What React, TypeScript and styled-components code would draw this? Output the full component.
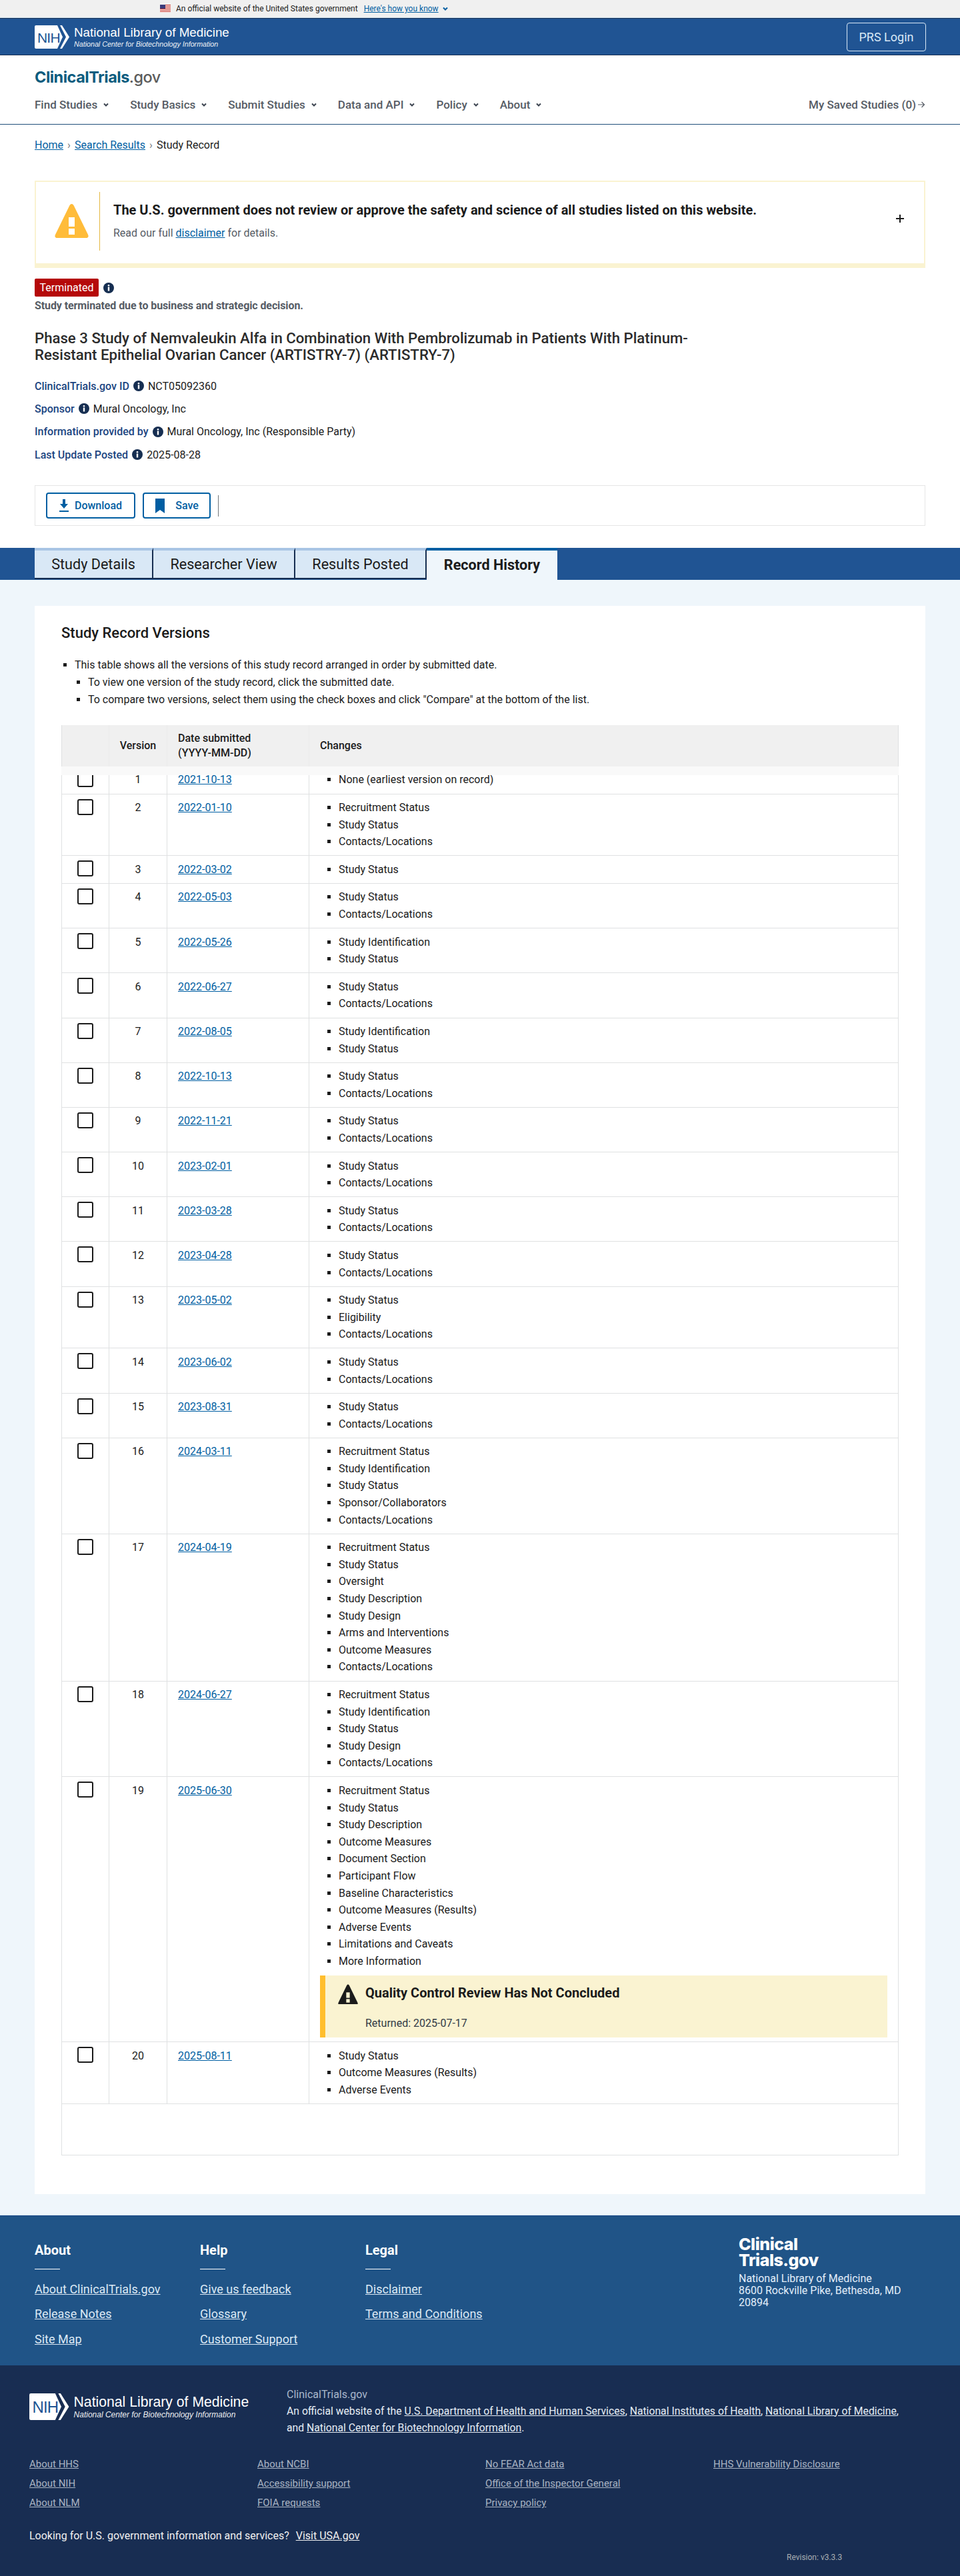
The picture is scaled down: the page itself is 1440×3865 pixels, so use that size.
import styled, { createGlobalStyle } from "styled-components";

const GlobalStyle = createGlobalStyle`
  html, body {
    margin: 0;
    padding: 0;
    background: #fff;
    color: #1b1b1b;
    font-family: Roboto, "Liberation Sans", sans-serif;
    font-size: 16px;
  }
  * { box-sizing: border-box; }
  a { color: #005ea2; }
`;

/* ---------- top banner + masthead ---------- */
const GovBanner = styled.div`
  height: 27px;
  background: #f0f0f0;
  border-bottom: 1px solid #cfe3f3;
  display: flex;
  align-items: center;
  padding-left: 240px;
  font-size: 12px;
  color: #1b1b1b;
  svg { display: block; }
`;
const GovText = styled.span`
  margin-left: 8px;
`;
const GovLink = styled.a`
  margin-left: 9px;
`;
const GovChevron = styled.span`
  margin-left: 5px;
  display: flex;
  color: #005ea2;
`;
const Masthead = styled.div`
  height: 56px;
  background: #205493;
  border-top: 1px solid #162e51;
  border-bottom: 1px solid #162e51;
  padding: 0 51px 0 52px;
  display: flex;
  align-items: center;
  justify-content: space-between;
`;
const LoginBtn = styled.a`
  width: 119px;
  height: 43px;
  border: 1px solid #d9e8f6;
  border-radius: 4px;
  color: #d9e8f6;
  display: flex;
  align-items: center;
  justify-content: center;
  font-size: 18px;
`;
const LogoWrap = styled.div`
  display: flex;
  align-items: center;
  color: #fff;
  gap: 6px;
`;
const LogoText = styled.div<{ $large?: boolean }>`
  font-family: "Liberation Sans", Arial, sans-serif;
  font-size: ${(p) => (p.$large ? "21.2px" : "18.8px")};
  line-height: ${(p) => (p.$large ? "25px" : "22px")};
  white-space: nowrap;
  small {
    display: block;
    font-style: italic;
    font-size: ${(p) => (p.$large ? "12px" : "10.7px")};
    line-height: ${(p) => (p.$large ? "14px" : "12px")};
    opacity: 0.92;
  }
`;

/* ---------- site nav ---------- */
const SiteHead = styled.div`
  height: 104px;
  padding: 20px 52px 0;
  border-bottom: 1px solid #1f4e79;
`;
const Brand = styled.div`
  font-family: Inter, "Open Sans", sans-serif;
  font-size: 23.5px;
  line-height: 26px;
  font-weight: 700;
  letter-spacing: -0.5px;
  color: #0c5c7e;
  span {
    font-weight: 500;
    color: #5c5c5c;
  }
`;
const NavRow = styled.nav`
  margin-top: 17px;
  display: flex;
  align-items: center;
  height: 22px;
`;
const NavItem = styled.a`
  display: flex;
  align-items: center;
  gap: 8px;
  margin-right: 31px;
  font-weight: 500;
  font-size: 17px;
  color: #565c65;
`;
const SavedLink = styled.a`
  margin-left: auto;
  display: flex;
  align-items: center;
  gap: 2px;
  font-weight: 500;
  font-size: 17px;
  color: #565c65;
`;
const Crumbs = styled.div`
  padding: 20px 52px 42px;
  line-height: 22px;
  display: flex;
  align-items: center;
  gap: 6px;
  color: #1b1b1b;
  i {
    width: 5px;
    font-style: normal;
    color: #71767a;
  }
`;

/* ---------- study summary ---------- */
const Summary = styled.section`
  padding: 0 52px 32.8px;
`;
const Notice = styled.div`
  height: 131px;
  border: 2px solid #faf3d1;
  border-bottom-width: 7px;
  padding: 15px 0 0 28px;
  display: flex;
  position: relative;
`;
const NoticeIcon = styled.div`
  width: 68px;
  height: 88px;
  border-right: 1px solid #e5b842;
  padding-top: 17px;
`;
const NoticeBody = styled.div`
  padding: 14px 0 0 20px;
`;
const NoticeTitle = styled.div`
  font-size: 20px;
  font-weight: 700;
  line-height: 26px;
  color: #1b1b1b;
`;
const NoticeText = styled.div`
  margin-top: 11px;
  line-height: 22px;
  color: #565c65;
`;
const PlusBtn = styled.span`
  position: absolute;
  right: 29px;
  top: 48px;
  display: flex;
  color: #1b1b1b;
`;
const StatusRow = styled.div`
  margin-top: 16px;
  display: flex;
  align-items: center;
  gap: 7px;
`;
const StatusBadge = styled.span`
  width: 96px;
  height: 27px;
  background: #b50909;
  color: #fff;
  border-radius: 2px;
  display: flex;
  align-items: center;
  justify-content: center;
`;
const WhyStopped = styled.div`
  margin-top: 3px;
  line-height: 22px;
  font-weight: 700;
  letter-spacing: -0.1px;
  color: #565c65;
`;
const StudyTitle = styled.h1`
  margin: 25px 0 0;
  font-size: 22.2px;
  line-height: 25px;
  font-weight: 500;
  color: #2b2b2b;
`;
const MetaList = styled.div`
  margin-top: 17px;
`;
const MetaRow = styled.div`
  height: 34.3px;
  display: flex;
  align-items: center;
  gap: 6px;
`;
const MetaLabel = styled.span`
  font-weight: 500;
  color: #1a4480;
`;
const ActionBox = styled.div`
  margin-top: 29px;
  height: 61px;
  border: 1px solid #e6e6e6;
  padding: 0 16px;
  display: flex;
  align-items: center;
  gap: 11px;
`;
const ActionBtn = styled.a<{ $w: number }>`
  width: ${(p) => p.$w}px;
  height: 39px;
  border: 2px solid #005ea2;
  border-radius: 4px;
  display: flex;
  align-items: center;
  justify-content: center;
  gap: 9px;
  color: #005ea2;
  font-weight: 500;
`;
const ActionSep = styled.span`
  width: 1px;
  height: 32px;
  background: #71767a;
`;

/* ---------- tabs ---------- */
const TabBand = styled.div`
  height: 48px;
  background: #205493;
  padding-left: 52px;
  display: flex;
`;
const Tab = styled.div<{ $w: number; $active?: boolean }>`
  width: ${(p) => p.$w}px;
  height: ${(p) => (p.$active ? "48px" : "47px")};
  display: flex;
  align-items: center;
  justify-content: center;
  font-size: 21.6px;
  font-weight: ${(p) => (p.$active ? 700 : 400)};
  color: #1b1b1b;
  background: ${(p) => (p.$active ? "#eff6fb" : "#d9e8f6")};
  border-top: 4px solid ${(p) => (p.$active ? "#005ea2" : "#a9c5e4")};
  border-bottom: ${(p) => (p.$active ? "none" : "2px solid #162e51")};
  border-right: ${(p) => (p.$active ? "none" : "2px solid #162e51")};
`;

/* ---------- versions card ---------- */
const Main = styled.main`
  background: #eff6fb;
  padding: 39px 52px 32px;
`;
const Card = styled.div`
  background: #fff;
  padding: 28px 40px 58px;
`;
const CardTitle = styled.h2`
  margin: 0;
  font-size: 22px;
  line-height: 26px;
  font-weight: 500;
`;
const HelpList = styled.ul<{ $nested?: boolean }>`
  margin: ${(p) => (p.$nested ? "0" : "22px 0 25px")};
  padding-left: 20px;
  line-height: 26px;
  list-style: square;
`;
const Table = styled.div`
  border-left: 1px solid #dfe1e2;
  border-right: 1px solid #dfe1e2;
  border-bottom: 1px solid #dfe1e2;
`;
const Columns = styled.div`
  display: grid;
  grid-template-columns: 70px 87px 213px 1fr;
`;
const HeadRow = styled(Columns)`
  height: 62px;
  background: #f0f0f0;
  position: relative;
  z-index: 1;
  font-weight: 500;
  line-height: 22px;
  &::after {
    content: "";
    position: absolute;
    left: -1px;
    right: -1px;
    top: 100%;
    height: 13px;
    background: #f9f9f9;
  }
`;
const HeadCell = styled.div<{ $center?: boolean }>`
  display: flex;
  align-items: center;
  justify-content: ${(p) => (p.$center ? "center" : "flex-start")};
  padding-left: ${(p) => (p.$center ? "0" : "16px")};
  border-left: 1px solid #ebebeb;
  &:first-child { border-left: none; }
`;
const Row = styled(Columns)`
  border-bottom: 1px solid #dfe1e2;
`;
const Cell = styled.div<{ $center?: boolean }>`
  padding: 7.5px ${(p) => (p.$center ? "0" : "16px")};
  line-height: 25.6px;
  text-align: ${(p) => (p.$center ? "center" : "left")};
  border-left: 1px solid #dfe1e2;
  &:first-child { border-left: none; }
`;
const CheckCell = styled(Cell)`
  padding: 7px 0 0;
  display: flex;
  justify-content: center;
`;
const CheckBox = styled.span`
  width: 24px;
  height: 24px;
  border: 2px solid #1b1b1b;
  border-radius: 3px;
  background: #fff;
`;
const ChangeList = styled.ul`
  margin: 0;
  padding-left: 28px;
  list-style: square;
`;
const FooterRow = styled.div`
  height: 76px;
`;
const QcAlert = styled.div`
  margin: 8px 0 -1px;
  height: 93px;
  background: #faf3d1;
  border-left: 8px solid #ffbe2e;
  padding: 13px 0 0 19px;
  display: grid;
  grid-template-columns: 41px 1fr;
`;
const QcTitle = styled.div`
  font-size: 20px;
  line-height: 26px;
  font-weight: 700;
`;
const QcText = styled.div`
  grid-column: 2;
  margin-top: 8px;
  line-height: 24px;
  color: #323a45;
`;

/* ---------- footers ---------- */
const SiteFooter = styled.footer`
  height: 225px;
  background: #205487;
  border-top: 1px solid #1a4480;
  box-shadow: 0 -1px 0 #cfe3f3;
  padding: 38px 52px 0;
  display: flex;
`;
const FooterCol = styled.div`
  width: 248px;
`;
const FooterHeading = styled.div`
  font-size: 20px;
  line-height: 26px;
  font-weight: 700;
  color: #fff;
  &::after {
    content: "";
    display: block;
    width: 38px;
    height: 1px;
    margin: 15px 0 17px;
    background: #fff;
  }
`;
const FooterLink = styled.a`
  display: block;
  font-size: 18px;
  line-height: 25px;
  margin-bottom: 12.5px;
  color: #dce9f5;
  text-decoration: underline;
`;
const FooterBrand = styled.div`
  margin-left: auto;
  width: 280px;
  margin-top: -8px;
  color: #e3eefa;
  line-height: 18px;
`;
const FooterLogo = styled.div`
  font-family: Inter, "Open Sans", sans-serif;
  font-weight: 800;
  font-size: 25px;
  line-height: 24px;
  letter-spacing: -0.5px;
  color: #fff;
  margin-bottom: 7px;
`;
const AgencyFooter = styled.div`
  height: 316px;
  background: #182d52;
  padding: 31px 44px 0;
  position: relative;
`;
const AgencyTop = styled.div`
  display: flex;
`;
const AgencyLogo = styled.div`
  width: 386px;
  padding-top: 11px;
`;
const AgencyName = styled.div`
  line-height: 25px;
  color: #a9b8cc;
`;
const AgencyLine = styled.div`
  width: 950px;
  font-size: 15.75px;
  line-height: 25px;
  color: #e6edf5;
  a { color: #e6edf5; }
`;
const AgencyLinks = styled.div`
  margin-top: 28px;
  display: grid;
  grid-template-columns: repeat(4, 342px);
  grid-template-rows: repeat(3, 29px);
  grid-auto-flow: column;
  align-items: center;
`;
const AgencyLink = styled.a`
  font-size: 15px;
  color: #a9b4c3;
  justify-self: start;
`;
const UsaLine = styled.div`
  margin-top: 24px;
  line-height: 22px;
  color: #f0f0f0;
  a { color: #f0f0f0; margin-left: 6px; }
`;
const Revision = styled.div`
  position: absolute;
  left: 1180px;
  top: 281px;
  font-size: 12px;
  color: #a9aeb1;
`;

/* ---------- drawings ---------- */
function Chevron({ color = "#3d4551", size = 10 }: { color?: string; size?: number }) {
  return (
    <svg width={size} height={size} viewBox="0 0 10 10">
      <polyline points="2,3.5 5,6.5 8,3.5" fill="none" stroke={color} strokeWidth="2" />
    </svg>
  );
}

function InfoIcon() {
  return (
    <svg width="16" height="16" viewBox="0 0 16 16">
      <circle cx="8" cy="8" r="8" fill="#162e51" />
      <circle cx="8" cy="4.2" r="1.3" fill="#fff" />
      <rect x="6.8" y="6.5" width="2.4" height="6" fill="#fff" />
    </svg>
  );
}

function Flag() {
  return (
    <svg width="16" height="12" viewBox="0 0 16 12">
      <rect width="16" height="12" fill="#fff" />
      {[0, 2, 4, 6, 8, 10].map((y) => (
        <rect key={y} y={y} width="16" height="1" fill="#c8372d" />
      ))}
      <rect width="8" height="6" fill="#3c3b7a" />
    </svg>
  );
}

function NihMark({ height }: { height: number }) {
  return (
    <svg width={(height * 53) / 35} height={height} viewBox="0 0 53 35">
      <path d="M2 0H34L42 17.5L34 35H2Q0 35 0 33V2Q0 0 2 0Z" fill="#fff" />
      <path d="M38 0H41L52 17.5L41 35H38L47 17.5Z" fill="#fff" />
      <text x="4" y="25.5" fontFamily="Liberation Sans, Arial, sans-serif" fontSize="21" letterSpacing="-0.8" fill="#205493">
        NIH
      </text>
    </svg>
  );
}

function WarnTriangle({ width, fill, mark }: { width: number; fill: string; mark: string }) {
  return (
    <svg width={width} height={(width * 52) / 51} viewBox="0 0 51 52">
      <path d="M25.5 1 C27 1 28 2 29 4 L50 47 C51.5 50 50 52 47 52 H4 C1 52 -0.5 50 1 47 L22 4 C23 2 24 1 25.5 1Z" fill={fill} />
      <rect x="21" y="21" width="9" height="14" fill={mark} />
      <rect x="21" y="38" width="9" height="9" fill={mark} />
    </svg>
  );
}

function Arrow() {
  return (
    <svg width="12" height="12" viewBox="0 0 12 12">
      <path d="M1 6H10.5M6.5 2L10.5 6L6.5 10" fill="none" stroke="#565c65" strokeWidth="1.2" />
    </svg>
  );
}

function Logo({ large }: { large?: boolean }) {
  return (
    <LogoWrap>
      <NihMark height={large ? 40 : 35} />
      <LogoText $large={large}>
        National Library of Medicine
        <small>National Center for Biotechnology Information</small>
      </LogoText>
    </LogoWrap>
  );
}

/* ---------- data ---------- */
const NAV = ["Find Studies", "Study Basics", "Submit Studies", "Data and API", "Policy", "About"];

const SS = "Study Status";
const CL = "Contacts/Locations";
const RS = "Recruitment Status";
const SI = "Study Identification";
const OM = "Outcome Measures";
const SD = "Study Design";

const VERSIONS: { date: string; changes: string[]; alert?: boolean }[] = [
  { date: "2021-10-13", changes: ["None (earliest version on record)"] },
  { date: "2022-01-10", changes: [RS, SS, CL] },
  { date: "2022-03-02", changes: [SS] },
  { date: "2022-05-03", changes: [SS, CL] },
  { date: "2022-05-26", changes: [SI, SS] },
  { date: "2022-06-27", changes: [SS, CL] },
  { date: "2022-08-05", changes: [SI, SS] },
  { date: "2022-10-13", changes: [SS, CL] },
  { date: "2022-11-21", changes: [SS, CL] },
  { date: "2023-02-01", changes: [SS, CL] },
  { date: "2023-03-28", changes: [SS, CL] },
  { date: "2023-04-28", changes: [SS, CL] },
  { date: "2023-05-02", changes: [SS, "Eligibility", CL] },
  { date: "2023-06-02", changes: [SS, CL] },
  { date: "2023-08-31", changes: [SS, CL] },
  { date: "2024-03-11", changes: [RS, SI, SS, "Sponsor/Collaborators", CL] },
  {
    date: "2024-04-19",
    changes: [RS, SS, "Oversight", "Study Description", SD, "Arms and Interventions", OM, CL],
  },
  { date: "2024-06-27", changes: [RS, SI, SS, SD, CL] },
  {
    date: "2025-06-30",
    changes: [
      RS,
      SS,
      "Study Description",
      OM,
      "Document Section",
      "Participant Flow",
      "Baseline Characteristics",
      "Outcome Measures (Results)",
      "Adverse Events",
      "Limitations and Caveats",
      "More Information",
    ],
    alert: true,
  },
  { date: "2025-08-11", changes: [SS, "Outcome Measures (Results)", "Adverse Events"] },
];

const FOOTER_COLS = [
  { title: "About", links: ["About ClinicalTrials.gov", "Release Notes", "Site Map"] },
  { title: "Help", links: ["Give us feedback", "Glossary", "Customer Support"] },
  { title: "Legal", links: ["Disclaimer", "Terms and Conditions"] },
];

const AGENCY_LINKS = [
  "About HHS",
  "About NIH",
  "About NLM",
  "About NCBI",
  "Accessibility support",
  "FOIA requests",
  "No FEAR Act data",
  "Office of the Inspector General",
  "Privacy policy",
  "HHS Vulnerability Disclosure",
];

export default function App() {
  return (
    <>
      <GlobalStyle />
      <GovBanner>
        <Flag />
        <GovText>An official website of the United States government</GovText>
        <GovLink href="#">Here's how you know</GovLink>
        <GovChevron>
          <Chevron color="#005ea2" />
        </GovChevron>
      </GovBanner>
      <Masthead>
        <Logo />
        <LoginBtn>PRS Login</LoginBtn>
      </Masthead>

      <SiteHead>
        <Brand>
          ClinicalTrials<span>.gov</span>
        </Brand>
        <NavRow>
          {NAV.map((n) => (
            <NavItem key={n}>
              {n}
              <Chevron />
            </NavItem>
          ))}
          <SavedLink>
            My Saved Studies (0)
            <Arrow />
          </SavedLink>
        </NavRow>
      </SiteHead>

      <Crumbs>
        <a href="#">Home</a>
        <i>›</i>
        <a href="#">Search Results</a>
        <i>›</i>
        <span>Study Record</span>
      </Crumbs>

      <Summary>
        <Notice>
          <NoticeIcon>
            <WarnTriangle width={51} fill="#ffbc3a" mark="#fff" />
          </NoticeIcon>
          <NoticeBody>
            <NoticeTitle>
              The U.S. government does not review or approve the safety and science of all studies listed on this
              website.
            </NoticeTitle>
            <NoticeText>
              Read our full <a href="#">disclaimer</a> for details.
            </NoticeText>
          </NoticeBody>
          <PlusBtn>
            <svg width="14" height="14" viewBox="0 0 14 14">
              <path d="M7 1V13M1 7H13" stroke="#1b1b1b" strokeWidth="2" />
            </svg>
          </PlusBtn>
        </Notice>

        <StatusRow>
          <StatusBadge>Terminated</StatusBadge>
          <InfoIcon />
        </StatusRow>
        <WhyStopped>Study terminated due to business and strategic decision.</WhyStopped>
        <StudyTitle>
          Phase 3 Study of Nemvaleukin Alfa in Combination With Pembrolizumab in Patients With Platinum-
          <br />
          Resistant Epithelial Ovarian Cancer (ARTISTRY-7) (ARTISTRY-7)
        </StudyTitle>

        <MetaList>
          <MetaRow>
            <MetaLabel>ClinicalTrials.gov ID</MetaLabel>
            <InfoIcon />
            <span>NCT05092360</span>
          </MetaRow>
          <MetaRow>
            <MetaLabel>Sponsor</MetaLabel>
            <InfoIcon />
            <span>Mural Oncology, Inc</span>
          </MetaRow>
          <MetaRow>
            <MetaLabel>Information provided by</MetaLabel>
            <InfoIcon />
            <span>Mural Oncology, Inc (Responsible Party)</span>
          </MetaRow>
          <MetaRow>
            <MetaLabel>Last Update Posted</MetaLabel>
            <InfoIcon />
            <span>2025-08-28</span>
          </MetaRow>
        </MetaList>

        <ActionBox>
          <ActionBtn $w={134}>
            <svg width="14" height="20" viewBox="0 0 14 20">
              <path d="M5 0H9V7H13L7 14L1 7H5Z" fill="#005ea2" />
              <rect y="17" width="14" height="2" fill="#005ea2" />
            </svg>
            Download
          </ActionBtn>
          <ActionBtn $w={102}>
            <svg width="16" height="22" viewBox="0 0 16 22" style={{ marginRight: 6 }}>
              <path d="M1 0H15V22L8 17L1 22Z" fill="#005ea2" />
            </svg>
            Save
          </ActionBtn>
          <ActionSep />
        </ActionBox>
      </Summary>

      <TabBand>
        <Tab $w={178}>Study Details</Tab>
        <Tab $w={213}>Researcher View</Tab>
        <Tab $w={197}>Results Posted</Tab>
        <Tab $w={196} $active>
          Record History
        </Tab>
      </TabBand>

      <Main>
        <Card>
          <CardTitle>Study Record Versions</CardTitle>
          <HelpList>
            <li>
              This table shows all the versions of this study record arranged in order by submitted date.
              <HelpList $nested>
                <li>To view one version of the study record, click the submitted date.</li>
                <li>
                  To compare two versions, select them using the check boxes and click "Compare" at the bottom of the
                  list.
                </li>
              </HelpList>
            </li>
          </HelpList>

          <Table>
            <HeadRow>
              <HeadCell />
              <HeadCell $center>Version</HeadCell>
              <HeadCell>
                Date submitted
                <br />
                (YYYY-MM-DD)
              </HeadCell>
              <HeadCell>Changes</HeadCell>
            </HeadRow>
            {VERSIONS.map((v, i) => (
              <Row key={v.date}>
                <CheckCell>
                  <CheckBox />
                </CheckCell>
                <Cell $center>{i + 1}</Cell>
                <Cell>
                  <a href="#">{v.date}</a>
                </Cell>
                <Cell>
                  <ChangeList>
                    {v.changes.map((c) => (
                      <li key={c}>{c}</li>
                    ))}
                  </ChangeList>
                  {v.alert && (
                    <QcAlert>
                      <WarnTriangle width={30} fill="#1b1b1b" mark="#faf3d1" />
                      <QcTitle>Quality Control Review Has Not Concluded</QcTitle>
                      <QcText>Returned: 2025-07-17</QcText>
                    </QcAlert>
                  )}
                </Cell>
              </Row>
            ))}
            <FooterRow />
          </Table>
        </Card>
      </Main>

      <SiteFooter>
        {FOOTER_COLS.map((col) => (
          <FooterCol key={col.title}>
            <FooterHeading>{col.title}</FooterHeading>
            {col.links.map((l) => (
              <FooterLink key={l}>{l}</FooterLink>
            ))}
          </FooterCol>
        ))}
        <FooterBrand>
          <FooterLogo>
            Clinical
            <br />
            Trials.gov
          </FooterLogo>
          National Library of Medicine
          <br />
          8600 Rockville Pike, Bethesda, MD
          <br />
          20894
        </FooterBrand>
      </SiteFooter>

      <AgencyFooter>
        <AgencyTop>
          <AgencyLogo>
            <Logo large />
          </AgencyLogo>
          <div>
            <AgencyName>ClinicalTrials.gov</AgencyName>
            <AgencyLine>
              An official website of the <a href="#">U.S. Department of Health and Human Services</a>,{" "}
              <a href="#">National Institutes of Health</a>, <a href="#">National Library of Medicine</a>,
              <br />
              and <a href="#">National Center for Biotechnology Information</a>.
            </AgencyLine>
          </div>
        </AgencyTop>
        <AgencyLinks>
          {AGENCY_LINKS.map((l) => (
            <AgencyLink href="#" key={l}>
              {l}
            </AgencyLink>
          ))}
        </AgencyLinks>
        <UsaLine>
          Looking for U.S. government information and services? <a href="#">Visit USA.gov</a>
        </UsaLine>
        <Revision>Revision: v3.3.3</Revision>
      </AgencyFooter>
    </>
  );
}
